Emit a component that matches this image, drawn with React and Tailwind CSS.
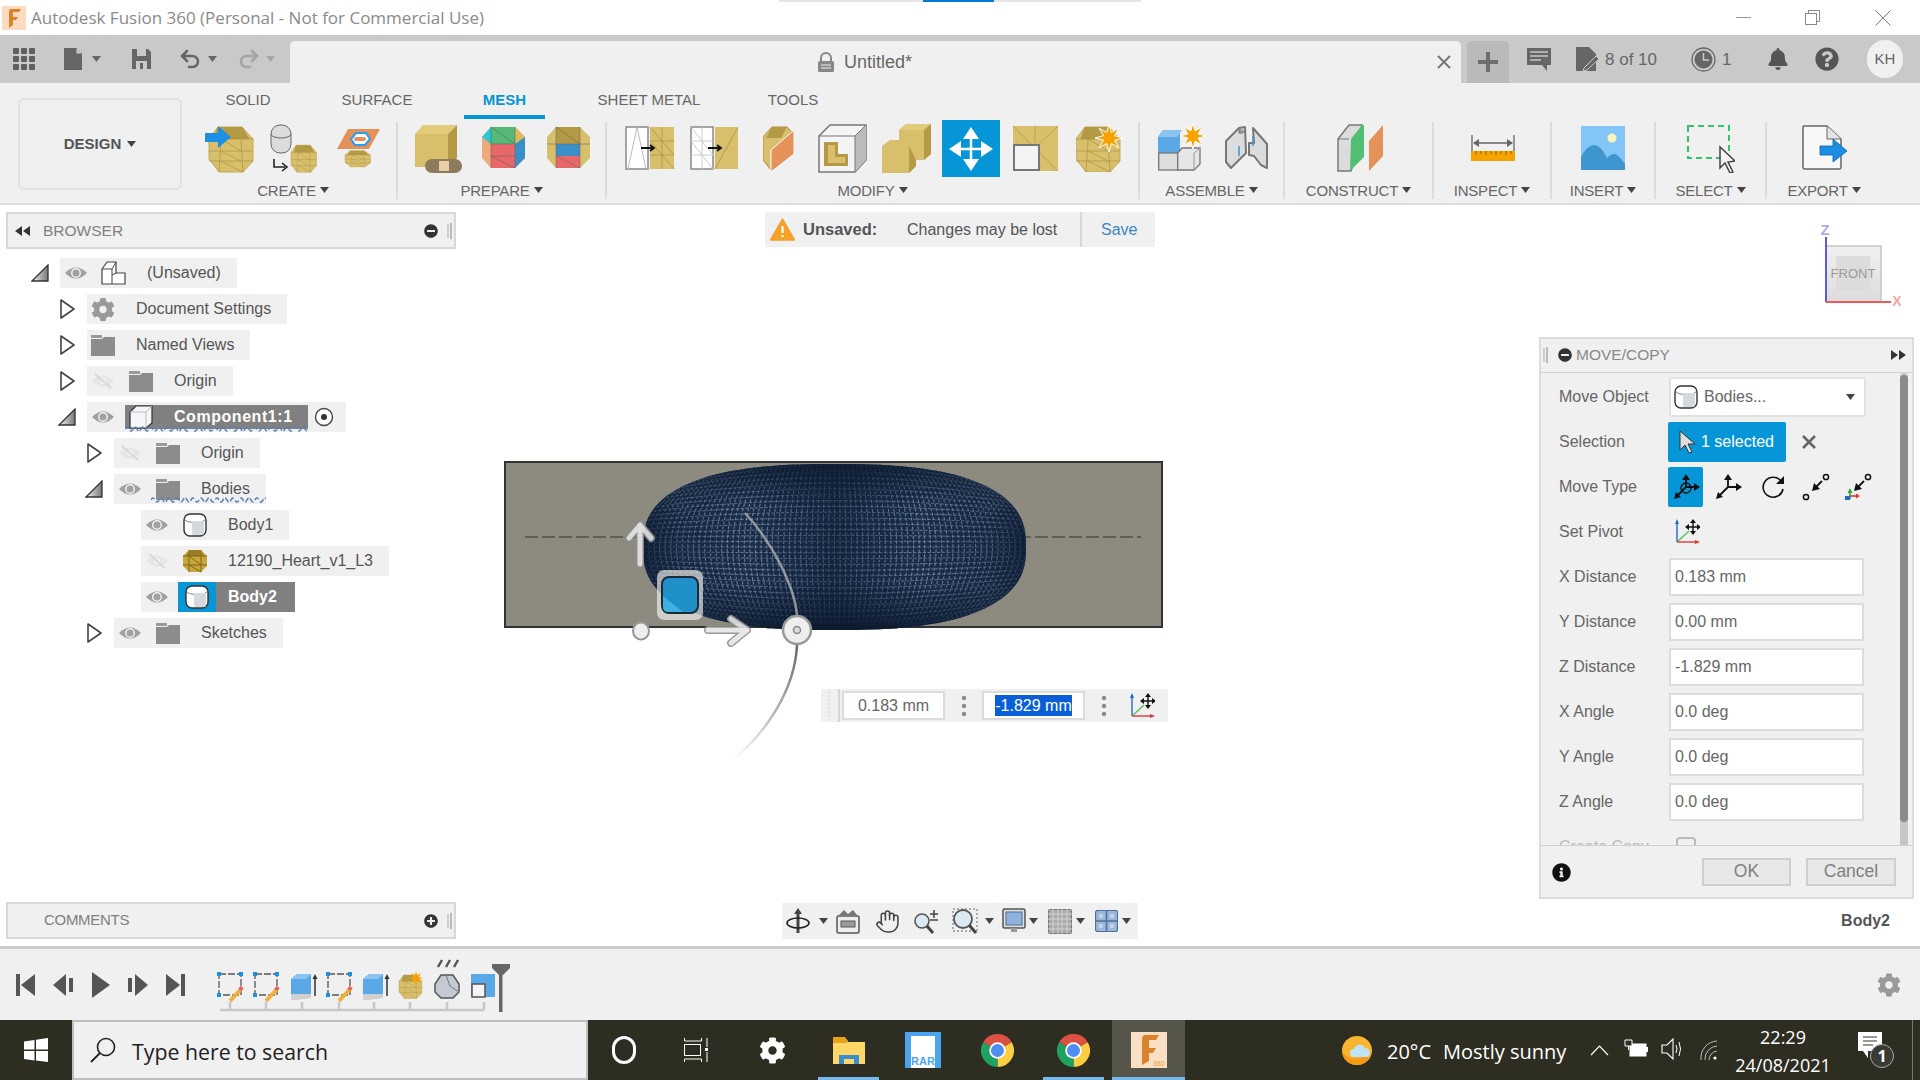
import React from 'react';
import { Hand, Undo2, Redo2 } from 'lucide-react';
import { FaBell, FaCog, FaInfoCircle, FaMinusCircle, FaPlusCircle, FaQuestionCircle } from 'react-icons/fa';

const GOLD = '#d8bf6c';
const GOLD_DARK = '#b59a45';
const GOLD_LINE = '#a88f3e';

const Svg = ({ w, h, className = '', children }) => (
  <svg width={w} height={h} viewBox={`0 0 ${w} ${h}`} className={`shrink-0 ${className}`}>
    {children}
  </svg>
);

const Caret = ({ className = '', color = '#444' }) => (
  <Svg w={9} h={6} className={className}>
    <polygon points="0,0 9,0 4.5,6" fill={color} />
  </Svg>
);

const starPoints = (cx, cy, r1, r2, n = 8) => {
  const pts = [];
  for (let i = 0; i < n * 2; i++) {
    const a = (Math.PI * i) / n;
    const r = i % 2 === 0 ? r1 : r2;
    pts.push(`${(cx + r * Math.sin(a)).toFixed(1)},${(cy - r * Math.cos(a)).toFixed(1)}`);
  }
  return pts.join(' ');
};

// faceted mesh blob used all over the ribbon
const Oct = ({ t = '' }) => (
  <g transform={t}>
    <polygon points="9,2 33,2 44,14 44,36 34,47 10,47 0,34 0,14" fill={GOLD} stroke="#c2a956" />
    <polygon points="9,2 33,2 40,14 5,14" fill={GOLD_DARK} />
    <path d="M0 14H44M0 26H44M0 36H44M12 14L10 47M32 14L34 47M12 14L32 26M12 26L32 36M12 36L34 47M5 14L9 2M40 14L33 2" stroke={GOLD_LINE} strokeOpacity="0.65" fill="none" />
  </g>
);

const TabBar = () => (
  <div className="h-[48px] bg-[#c9c9c9] flex items-end">
    <div className="w-[290px] h-full flex items-center text-[#666]">
      <Svg w={22} h={22} className="ml-[13px]">
        {[0, 8, 16].map((y) => [0, 8, 16].map((x) => <rect key={`${x}-${y}`} x={x} y={y} width="6" height="6" rx="1" fill="#5f5f5f" />))}
      </Svg>
      <Svg w={20} h={24} className="ml-[28px]">
        <path d="M1 1H13L19 7V23H1Z" fill="#666" />
        <path d="M13 1V7H19" fill="#c9c9c9" stroke="#666" />
      </Svg>
      <Caret className="ml-[9px]" color="#666" />
      <Svg w={21} h={22} className="ml-[30px]">
        <path d="M1 1H17L20 4V21H1Z" fill="#666" />
        <rect x="6" y="1" width="9" height="7" fill="#c9c9c9" />
        <rect x="5" y="13" width="11" height="8" fill="#c9c9c9" />
        <rect x="9" y="15" width="3" height="6" fill="#666" />
      </Svg>
      <Undo2 size={24} strokeWidth={2.6} color="#666" className="ml-[26px]" />
      <Caret className="ml-[6px]" color="#666" />
      <Redo2 size={24} strokeWidth={2.6} color="#a5a5a5" className="ml-[20px]" />
      <Caret className="ml-[5px]" color="#a5a5a5" />
    </div>
    <div className="w-[1171px] h-[42px] bg-[#f0f0f0] rounded-t-[5px] flex items-center pl-[527px]">
      <Svg w={18} h={20}>
        <path d="M4 9V6a5 5 0 0 1 10 0V9" fill="none" stroke="#888" strokeWidth="2" />
        <rect x="1" y="9" width="16" height="11" rx="1.5" fill="#888" />
        <path d="M4 13H14M4 16H14" stroke="#f0f0f0" />
      </Svg>
      <span className="ml-[9px] mt-[1px] text-[18px] text-[#666]">Untitled*</span>
      <Svg w={14} h={14} className="ml-auto mr-[10px]">
        <path d="M1 1L13 13M13 1L1 13" stroke="#777" strokeWidth="2" />
      </Svg>
    </div>
    <div className="w-[42px] h-[42px] ml-[6px] rounded-t-[5px] bg-[#bababa] flex items-center justify-center">
      <Svg w={20} h={20}>
        <path d="M10 0V20M0 10H20" stroke="#6e6e6e" strokeWidth="4" />
      </Svg>
    </div>
    <div className="flex-1 h-full flex items-center text-[#666] text-[17px]">
      <Svg w={24} h={23} className="ml-[18px]">
        <path d="M0 0H24V17H20V23L15 17H0Z" fill="#666" />
        <path d="M3 4H21M3 8H21M3 12H14" stroke="#c9c9c9" strokeWidth="1.5" />
      </Svg>
      <Svg w={24} h={24} className="ml-[25px]">
        <path d="M0 0H13L20 7V24H0Z" fill="#666" />
        <path d="M8 21L20 9L23 12L11 23L7 24Z" fill="#666" stroke="#c9c9c9" />
      </Svg>
      <span className="ml-[5px] mt-[1px] w-[86px]">8 of 10</span>
      <Svg w={25} h={25}>
        <circle cx="12.5" cy="12.5" r="11.5" fill="none" stroke="#666" strokeWidth="1.3" />
        <circle cx="12.5" cy="12.5" r="9" fill="#666" />
        <path d="M12.5 6V13H18" stroke="#c9c9c9" strokeWidth="1.5" fill="none" />
      </Svg>
      <span className="ml-[6px] mt-[1px] w-[45px]">1</span>
      <FaBell size={22} color="#555" />
      <FaQuestionCircle size={24} color="#555" className="ml-[26px]" />
      <div className="ml-[28px] w-[36px] h-[38px] rounded-full bg-[#f0f0f0] flex items-center justify-center text-[15px]">KH</div>
    </div>
  </div>
);

const Section = ({ className, pad, label, border = true, children }) => (
  <div className={`h-[77px] ${border ? 'border-r-2 border-[#dcdcdc]' : ''} ${className}`}>
    <div className={`h-[50px] mt-[1px] flex items-start ${pad}`}>{children}</div>
    <div className="mt-[8px] h-[18px] flex items-center justify-center text-[15px] tracking-[-0.2px] text-[#666] leading-none">
      <span>{label}</span>
      <Caret className="ml-[4px]" />
    </div>
  </div>
);

const Ribbon = () => (
  <div className="h-[122px] bg-[#f0f0f0] border-b-2 border-[#dedede] flex">
    <div className="ml-[18px] mt-[15px] w-[164px] h-[92px] mr-[8px] border-2 border-[#e1e1e1] rounded-[6px] flex items-center justify-center text-[15px] font-bold text-[#555]">
      DESIGN
      <Caret className="ml-[6px]" />
    </div>
    <div className="flex-1">
      <div className="h-[36px] flex text-[15px] text-[#666]">
        {[
          ['SOLID', 'ml-[18px] w-[80px]'],
          ['SURFACE', 'ml-[49px] w-[80px]'],
          ['MESH', 'ml-[47px] w-[81px] text-[#0696d7] font-bold border-b-4 border-[#0696d7]'],
          ['SHEET METAL', 'ml-[45px] w-[118px]'],
          ['TOOLS', 'ml-[45px] w-[80px]'],
        ].map(([name, cls]) => (
          <div key={name} className={`h-[36px] pt-[6px] text-center ${cls}`}>{name}</div>
        ))}
      </div>
      <div className="mt-[3px] flex">
        <Section className="w-[208px]" pad="pl-[15px]" label="CREATE">
          <Svg w={49} h={49} className="mt-[1px]">
            <Oct t="translate(4,1)" />
            <polygon points="0,9 13,9 13,2 26,13 13,24 13,18 0,18" fill="#1a8fe3" />
          </Svg>
          <Svg w={47} h={49} className="ml-[16px] mt-[1px]">
            <rect x="1" y="1" width="20" height="28" rx="9" fill="#dcdcdc" stroke="#666" />
            <path d="M1 10a10 4 0 0 0 20 0" fill="none" stroke="#666" />
            <path d="M4 35V43H15M12 39L17 43L12 47" fill="none" stroke="#222" strokeWidth="1.6" />
            <Oct t="translate(21,20) scale(0.58,0.6)" />
          </Svg>
          <Svg w={43} h={49} className="ml-[20px] mt-[1px]">
            <polygon points="11,5 43,5 32,25 0,25" fill="#e4915a" />
            <polygon points="14,15 19,9 29,9 33,15 28,21 18,21" fill="#fff" stroke="#2d9cf0" strokeWidth="2" />
            <rect x="17" y="13" width="12" height="4" rx="2" fill="#e4915a" />
            <Oct t="translate(8,26) scale(0.58,0.36)" />
          </Svg>
        </Section>
        <Section className="w-[209px]" pad="pl-[17px]" label="PREPARE">
          <Svg w={47} h={49} className="mt-[1px]">
            <polygon points="8,1 42,1 33,10 0,10" fill="#e2cb7b" />
            <polygon points="0,10 33,10 33,43 0,43" fill={GOLD} />
            <polygon points="33,10 42,1 42,34 33,43" fill={GOLD_DARK} />
            <rect x="10" y="35" width="37" height="14" rx="7" fill="#8e7a5c" />
            <rect x="24" y="37" width="10" height="10" fill="#e8cfa6" />
          </Svg>
          <Svg w={43} h={43} className="ml-[20px] mt-[3px]">
            <polygon points="9,1 33,1 43,11 43,32 33,42 9,42 0,32 0,11" fill="#eeaa78" />
            <polygon points="9,1 0,11 9,18" fill="#2cc6d4" />
            <polygon points="33,1 43,11 33,18" fill="#dfbb55" />
            <polygon points="33,18 43,11 43,32 33,42" fill="#3b8fc9" />
            <rect x="9" y="1" width="24" height="17" fill="#55b979" />
            <rect x="9" y="18" width="24" height="24" fill="#e8686a" />
            <path d="M9 1L33 18M9 30H33M9 30L33 42M9 1V42M33 1V42M9 18H33" stroke="#5b5b5b" strokeOpacity="0.5" fill="none" />
          </Svg>
          <Svg w={43} h={43} className="ml-[22px] mt-[3px]">
            <polygon points="9,1 33,1 43,11 43,32 33,42 9,42 0,32 0,11" fill={GOLD} />
            <rect x="9" y="1" width="24" height="17" fill={GOLD_DARK} />
            <rect x="9" y="18" width="24" height="12" fill="#3b8fc9" />
            <rect x="9" y="30" width="24" height="12" fill="#e8686a" />
            <path d="M9 1L33 18M9 30L33 42M9 1V42M33 1V42M9 18H33M0 18H9M33 18H43" stroke="#5b5b5b" strokeOpacity="0.5" fill="none" />
          </Svg>
        </Section>
        <Section className="w-[533px]" pad="pl-[18px]" label="MODIFY">
          <Svg w={49} h={44} className="mt-[3px]">
            <rect x="1" y="1" width="22" height="42" fill="#fff" stroke="#888" strokeWidth="1.5" />
            <path d="M12 1L3 43M12 1L21 43" stroke="#bbb" fill="none" />
            <rect x="25" y="1" width="24" height="42" fill={GOLD} />
            <path d="M25 15H49M25 29H49M37 1V43M25 1L49 29M25 15L49 43" stroke={GOLD_LINE} strokeOpacity="0.7" fill="none" />
            <path d="M16 22H28M25 19L29 22L25 25" stroke="#111" strokeWidth="1.8" fill="none" />
          </Svg>
          <Svg w={48} h={44} className="ml-[16px] mt-[3px]">
            <rect x="1" y="1" width="22" height="42" fill="#fff" stroke="#888" strokeWidth="1.5" />
            <path d="M1 15H23M1 29H23M12 1V43M1 1L23 29M1 15L23 43" stroke="#ccc" fill="none" />
            <rect x="25" y="1" width="23" height="42" fill={GOLD} />
            <path d="M48 1L25 43" stroke={GOLD_LINE} strokeOpacity="0.7" fill="none" />
            <path d="M18 22H30M27 19L31 22L27 25" stroke="#111" strokeWidth="1.8" fill="none" />
          </Svg>
          <Svg w={31} h={46} className="ml-[25px] mt-[3px]">
            <polygon points="9,1 24,1 31,8 8,44 0,34 0,11" fill={GOLD} stroke={GOLD_LINE} />
            <polygon points="9,1 24,1 18,12 3,12" fill={GOLD_DARK} />
            <polygon points="31,4 31,28 8,46 8,24" fill="#e4915a" stroke="#fff" />
          </Svg>
          <Svg w={49} h={49} className="ml-[24px] mt-[1px]">
            <polygon points="1,12 12,1 48,1 48,36 37,48 1,48" fill="#f4f4f4" stroke="#777" strokeWidth="1.5" />
            <polygon points="37,12 48,1 48,36 37,48" fill="#bcbcbc" />
            <path d="M1 12H37V48M37 12L48 1" stroke="#777" fill="none" />
            <polygon points="6,18 20,18 20,30 30,30 30,42 6,42" fill={GOLD_DARK} />
            <polygon points="10,21 17,21 17,33 27,33 27,39 10,39" fill={GOLD} />
          </Svg>
          <Svg w={49} h={49} className="ml-[15px] mt-[1px]">
            <polygon points="17,6 24,0 49,0 49,30 42,36 34,36 34,42 27,49 0,49 0,22 8,16 17,16" fill={GOLD} />
            <polygon points="17,6 24,0 49,0 42,6" fill="#e2cb7b" />
            <polygon points="42,6 49,0 49,30 42,36" fill={GOLD_DARK} />
            <polygon points="27,22 34,36 34,42 27,49" fill={GOLD_DARK} />
          </Svg>
          <div className="w-[58px] h-[57px] ml-[11px] -mt-[3px] bg-[#0696d7] flex items-center justify-center">
            <Svg w={46} h={46}>
              <path d="M23 4V42M4 23H42" stroke="#fff" strokeWidth="2.5" />
              <path d="M23 1L31 13H15ZM23 45L31 33H15ZM1 23L13 15V31ZM45 23L33 15V31Z" fill="#fff" />
            </Svg>
          </div>
          <Svg w={45} h={45} className="ml-[13px] mt-[3px]">
            <rect width="45" height="45" fill={GOLD} />
            <path d="M0 0L45 45M22 0V45M45 0L22 22" stroke={GOLD_LINE} strokeOpacity="0.6" fill="none" />
            <rect x="1" y="19" width="25" height="25" fill="#f4f4f4" stroke="#777" strokeWidth="2" />
          </Svg>
          <Svg w={47} h={48} className="ml-[18px] mt-[1px]">
            <Oct t="translate(0,1)" />
            <polygon points={starPoints(33, 14, 14, 6)} fill="#f5a300" stroke="#fff" strokeWidth="1" />
          </Svg>
        </Section>
        <Section className="w-[145px]" pad="pl-[18px]" label="ASSEMBLE">
          <Svg w={48} h={48}>
            <polygon points="0,14 5,7 22,7 22,30 0,30" fill="#5ba8e6" />
            <polygon points="0,14 5,7 24,7 19,14" fill="#8cc4f0" />
            <rect x="0.7" y="30" width="19" height="17" fill="#dedede" stroke="#777" strokeWidth="1.3" />
            <polygon points="19.7,30 24,25 42,25 42,41 36,47 19.7,47" fill="#e6e6e6" stroke="#777" strokeWidth="1.3" />
            <path d="M36 47V30M36 30L42 25" stroke="#999" fill="none" />
            <polygon points={starPoints(35, 13, 13, 5.5)} fill="#f5a300" stroke="#fff" strokeWidth="1" />
          </Svg>
          <Svg w={45} h={46} className="ml-[19px] mt-[2px]">
            <polygon points="1,16 14,3 20,2 21,28 6,43 1,37" fill="#dcdcdc" stroke="#777" strokeWidth="2" strokeLinejoin="round" />
            <path d="M14 3V8Q18 9 20 6" fill="#9a9a9a" stroke="#777" />
            <polygon points="28,3 42,19 42,43 36,40 29,31 24,30 24,18 29,18" fill="#dcdcdc" stroke="#777" strokeWidth="2" strokeLinejoin="round" />
            <path d="M14 21V31M28 11V21" stroke="#3b9be0" strokeWidth="1.6" />
          </Svg>
        </Section>
        <Section className="w-[149px]" pad="pl-[52px]" label="CONSTRUCT">
          <Svg w={46} h={48} className="mt-[1px]">
            <polygon points="1,15 12,1 25,1 25,15 14,47 1,47" fill="#dcdcdc" stroke="#777" strokeWidth="1.5" />
            <path d="M12 15H1" stroke="#777" />
            <polygon points="14,15 25,1 27,1 27,33 13,47" fill="#52be74" />
            <polygon points="32,17 46,1 46,32 32,47" fill="#e4915a" />
          </Svg>
        </Section>
        <Section className="w-[118px]" pad="pl-[37px]" label="INSPECT">
          <Svg w={44} h={26} className="mt-[12px]">
            <path d="M1 0V16M43 0V16M3 8H41" stroke="#666" strokeWidth="1.3" />
            <path d="M2 8L8 4V12ZM42 8L36 4V12Z" fill="#666" />
            <rect x="0" y="16" width="44" height="10" fill="#f5a300" />
            <path d="M5 16V20M10 16V19M15 16V20M20 16V19M25 16V20M30 16V19M35 16V20M40 16V19" stroke="#8a6100" />
          </Svg>
        </Section>
        <Section className="w-[104px]" pad="pl-[29px]" label="INSERT">
          <Svg w={44} h={44} className="mt-[3px]">
            <rect width="44" height="44" fill="#81c6f7" />
            <circle cx="31" cy="12" r="4.5" fill="#f6f4b8" />
            <path d="M0 31Q6 19 14 19Q20 20 26 32Q32 26 36 29Q40 32 44 38V44H0Z" fill="#3f96cf" />
          </Svg>
        </Section>
        <Section className="w-[111px]" pad="pl-[31px]" label="SELECT">
          <Svg w={48} h={48} className="mt-[2px]">
            <rect x="1" y="1" width="41" height="32" fill="none" stroke="#34c26a" strokeWidth="2" strokeDasharray="6 4" />
            <path d="M33 22L33 43L38 38L43 48L46 47L41 37L48 36Z" fill="#f4f4f4" stroke="#444" strokeWidth="1.5" />
          </Svg>
        </Section>
        <Section className="w-[114px]" pad="pl-[35px]" label="EXPORT" border={false}>
          <Svg w={46} h={46} className="mt-[2px]">
            <path d="M1 2Q1 1 2 1H25L39 14V42Q39 44 37 44H3Q1 44 1 42Z" fill="#f8f8f8" stroke="#666" strokeWidth="1.5" />
            <path d="M25 1V14H39" fill="#e5e5e5" stroke="#666" />
            <path d="M18 21H31V14L45 26L31 37V30H18Z" fill="#1a8fe3" stroke="#0d5fb0" strokeWidth="0.8" />
          </Svg>
        </Section>
      </div>
    </div>
  </div>
);

const Eye = ({ off }) =>
  off ? (
    <Svg w={24} h={16}>
      <path d="M1 8Q12 -3 23 8Q12 19 1 8Z" fill="#e6e6e6" />
      <circle cx="12" cy="8" r="3" fill="#f2f2f2" />
      <path d="M4 1L20 15" stroke="#d8d8d8" strokeWidth="2" />
    </Svg>
  ) : (
    <Svg w={24} h={16}>
      <path d="M1 8Q12 -3 23 8Q12 19 1 8Z" fill="#a0a0a0" />
      <circle cx="12" cy="8" r="5" fill="#f0f0f0" />
      <circle cx="12" cy="8" r="3.5" fill="#a0a0a0" />
    </Svg>
  );

const Folder = () => (
  <Svg w={24} h={22}>
    <path d="M0 1H11V4H0Z" fill="#9a9a9a" />
    <path d="M0 5H11L13 3H24V22H0Z" fill="#8c8c8c" />
  </Svg>
);

const BodyIcon = () => (
  <Svg w={24} h={24}>
    <rect x="1" y="1" width="22" height="22" rx="6" fill="#fff" stroke="#333" strokeWidth="1.4" />
    <path d="M1.5 6a10.5 3.5 0 0 0 21 0" fill="none" stroke="#666" strokeWidth="0.8" />
    <rect x="9" y="8" width="12" height="14" rx="2" fill="#d5d9de" />
  </Svg>
);

const CubeIcon = () => (
  <Svg w={24} h={24}>
    <polygon points="1,7 7,1 23,1 23,18 17,23 1,23" fill="#f4f6f9" stroke="#333" strokeWidth="1.2" />
    <path d="M1 7H17V23M17 7L23 1" stroke="#bbb" fill="none" />
  </Svg>
);

const PartsIcon = () => (
  <Svg w={26} h={25}>
    <path d="M1 8L6 1H15V12H24V23H1Z" fill="#fff" stroke="#444" strokeWidth="1.2" />
    <path d="M11 23V8M1 8H11L15 1M11 14L15 12" stroke="#444" fill="none" />
  </Svg>
);

const HeartIcon = () => (
  <Svg w={24} h={24}>
    <polygon points="6,1 18,1 24,7 24,17 18,23 6,23 0,17 0,7" fill="#c7a63a" />
    <polygon points="6,1 18,1 21,7 3,7" fill="#9a7d22" />
    <path d="M0 7H24M0 16H24M6 7L6 23M18 7L18 23M6 7L18 16M6 16L18 23" stroke="#7f6719" fill="none" />
  </Svg>
);

const TREE_ICONS = {
  gear: <FaCog size={25} color="#9a9a9a" />,
  folder: <Folder />,
  body: <BodyIcon />,
  cube: <CubeIcon />,
  parts: <PartsIcon />,
  heart: <HeartIcon />,
};

const squiggle = (w) => {
  let d = 'M0 3';
  for (let x = 0; x < w; x += 8) d += ' q2 -4 4 0 t4 0';
  return d;
};

const Squiggle = ({ w, className }) => (
  <svg width={w} height={6} className={`absolute ${className}`}>
    <path d={squiggle(w)} stroke="#5b7fb5" strokeWidth="1.6" strokeDasharray="5 2" fill="none" />
  </svg>
);

const TREE = [
  { depth: 0, open: true, eye: 'on', icon: 'parts', label: '(Unsaved)' },
  { depth: 1, open: false, icon: 'gear', label: 'Document Settings' },
  { depth: 1, open: false, icon: 'folder', label: 'Named Views' },
  { depth: 1, open: false, eye: 'off', icon: 'folder', label: 'Origin' },
  { depth: 1, open: true, eye: 'on', icon: 'cube', label: 'Component1:1', variant: 'active' },
  { depth: 2, open: false, eye: 'off', icon: 'folder', label: 'Origin' },
  { depth: 2, open: true, eye: 'on', icon: 'folder', label: 'Bodies', wavy: true },
  { depth: 3, eye: 'on', icon: 'body', label: 'Body1' },
  { depth: 3, eye: 'off', icon: 'heart', label: '12190_Heart_v1_L3' },
  { depth: 3, eye: 'on', icon: 'body', label: 'Body2', variant: 'selected' },
  { depth: 2, open: false, eye: 'on', icon: 'folder', label: 'Sketches' },
];

const INDENT = ['pl-[27px]', 'pl-[54px]', 'pl-[81px]', 'pl-[108px]'];

const Twisty = ({ open }) => {
  if (open === undefined) return null;
  return open ? (
    <Svg w={18} h={18} className="-ml-[2px]">
      <defs>
        <linearGradient id="twisty" x1="0" x2="1">
          <stop offset="0" stopColor="#f4f4f4" />
          <stop offset="1" stopColor="#777" />
        </linearGradient>
      </defs>
      <polygon points="1,17 17,1 17,17" fill="url(#twisty)" stroke="#333" strokeWidth="1.3" />
    </Svg>
  ) : (
    <Svg w={15} h={20}>
      <polygon points="1,1 14,10 1,19" fill="#fff" stroke="#444" strokeWidth="1.6" strokeLinejoin="round" />
    </Svg>
  );
};

const TreeRow = ({ row }) => {
  const { depth, open, eye, icon, label, variant, wavy } = row;
  let body;
  if (variant === 'active') {
    body = (
      <>
        <div className="w-[24px] mr-[10px]"><Eye /></div>
        <div className="relative w-[183px] h-[24px] bg-[#808080] flex items-center pl-[4px]">
          {TREE_ICONS[icon]}
          <span className="ml-[21px] font-bold text-white tracking-[0.55px]">{label}</span>
          <Squiggle w={183} className="left-0 -bottom-[3px]" />
        </div>
        <Svg w={20} h={20} className="ml-[6px]">
          <circle cx="10" cy="10" r="8.5" fill="#fff" stroke="#444" strokeWidth="1.4" />
          <circle cx="10" cy="10" r="3" fill="#333" />
        </Svg>
      </>
    );
  } else if (variant === 'selected') {
    body = (
      <>
        <div className="w-[24px] mr-[9px]"><Eye /></div>
        <div className="h-[30px] bg-[#808080] flex items-center pr-[18px]">
          <div className="w-[38px] h-[30px] bg-[#0696d7] flex items-center justify-center">{TREE_ICONS[icon]}</div>
          <span className="ml-[12px] font-bold text-white">{label}</span>
        </div>
      </>
    );
  } else {
    body = (
      <>
        {eye && <div className="w-[24px] mr-[14px]"><Eye off={eye === 'off'} /></div>}
        <div className="relative w-[24px] flex justify-center">{TREE_ICONS[icon]}</div>
        <span className="ml-[21px]">{label}</span>
        {wavy && <Squiggle w={115} className="left-[37px] bottom-[1px]" />}
      </>
    );
  }
  const pillPad = variant === 'selected' ? 'pr-0' : variant === 'active' ? 'pr-[12px]' : 'pr-[16px]';
  return (
    <div className={`flex items-center h-[36px] ${INDENT[depth]}`}>
      <div className="w-[27px] flex items-center">
        <Twisty open={open} />
      </div>
      <div className={`relative h-[30px] bg-[#f0f0f0] flex items-center pl-[4px] ${pillPad}`}>{body}</div>
    </div>
  );
};

const Grip = ({ className = '' }) => (
  <Svg w={5} h={16} className={className}>
    <path d="M1 1V15" stroke="#aaa" />
    <path d="M4 0V16" stroke="#888" />
  </Svg>
);

const BrowserColumn = () => (
  <div className="relative w-[456px] pl-[6px] py-[7px] flex flex-col text-[#555] text-[16px]">
    <div className="h-[37px] bg-[#f0f0f0] border-2 border-[#d8d8d8] flex items-center pl-[7px]">
      <Svg w={15} h={10}>
        <path d="M7 0V10L0 5ZM15 0V10L8 5Z" fill="#333" />
      </Svg>
      <span className="ml-[13px] text-[15.5px] text-[#808080]">BROWSER</span>
      <FaMinusCircle size={14} color="#333" className="ml-auto" />
      <Grip className="ml-[9px] mr-[2px]" />
    </div>
    <div className="mt-[6px]">
      {TREE.map((row, i) => <TreeRow key={i} row={row} />)}
    </div>
    <div className="mt-auto h-[37px] bg-[#f0f0f0] border-2 border-[#d8d8d8] flex items-center pl-[36px]">
      <span className="text-[15px] tracking-[-0.3px] text-[#808080]">COMMENTS</span>
      <FaPlusCircle size={14} color="#333" className="ml-auto" />
      <Grip className="ml-[9px] mr-[2px]" />
    </div>
  </div>
);

// the heart mesh, drawn in page coordinates; grid squeezed into the shape so it follows the rim
const MESH = (() => {
  const cx = 834.5, cy = 547, rx = 191.5, ry = 83;
  let outline = '';
  for (let i = 0; i <= 120; i++) {
    const a = (i / 120) * Math.PI * 2;
    const c = Math.cos(a), s = Math.sin(a);
    const x = cx + rx * Math.sign(c) * Math.pow(Math.abs(c), 0.78);
    const y = cy + ry * Math.sign(s) * Math.pow(Math.abs(s), 0.78);
    outline += `${i === 0 ? 'M' : 'L'}${x.toFixed(1)} ${y.toFixed(1)}`;
  }
  const map = (u, v) => {
    const x = cx + rx * 1.12 * u * Math.sqrt(1 - (v * v) / 2);
    const y = cy + ry * 1.12 * v * Math.sqrt(1 - (u * u) / 2);
    return `${x.toFixed(1)} ${y.toFixed(1)}`;
  };
  let v = '';
  let h = '';
  const nu = 76, nv = 32, steps = 36;
  for (let i = 0; i <= nu; i++) {
    const u = (i / nu) * 2 - 1;
    for (let k = 0; k <= steps; k++) v += `${k === 0 ? 'M' : 'L'}${map(u, (k / steps) * 2 - 1)}`;
  }
  for (let i = 0; i <= nv; i++) {
    const w = (i / nv) * 2 - 1;
    for (let k = 0; k <= steps; k++) h += `${k === 0 ? 'M' : 'L'}${map((k / steps) * 2 - 1, w)}`;
  }
  return { outline, v, h };
})();

const Arrow = ({ d }) => (
  <g opacity="0.9">
    <path d={d} stroke="#8f8f8f" strokeWidth="8" fill="none" strokeLinecap="round" strokeLinejoin="round" />
    <path d={d} stroke="#e6e6e6" strokeWidth="5" fill="none" strokeLinecap="round" strokeLinejoin="round" />
  </g>
);

const Scene = () => (
  <svg width="1920" height="741" className="absolute left-0 top-0">
    <defs>
      <clipPath id="meshClip"><path d={MESH.outline} /></clipPath>
      <linearGradient id="meshShade" x1="0" x2="1">
        <stop offset="0" stopColor="#0b1a30" stopOpacity="0.85" />
        <stop offset="0.1" stopColor="#0b1a30" stopOpacity="0.3" />
        <stop offset="0.28" stopColor="#0b1a30" stopOpacity="0" />
        <stop offset="0.5" stopColor="#0b1a30" stopOpacity="0.5" />
        <stop offset="0.72" stopColor="#0b1a30" stopOpacity="0" />
        <stop offset="0.9" stopColor="#0b1a30" stopOpacity="0.3" />
        <stop offset="1" stopColor="#0b1a30" stopOpacity="0.85" />
      </linearGradient>
      <linearGradient id="meshShadeV" x1="0" x2="0" y1="0" y2="1">
        <stop offset="0" stopColor="#0b1a30" stopOpacity="0.85" />
        <stop offset="0.25" stopColor="#0b1a30" stopOpacity="0" />
        <stop offset="0.7" stopColor="#0b1a30" stopOpacity="0" />
        <stop offset="1" stopColor="#0b1a30" stopOpacity="1" />
      </linearGradient>
      <linearGradient id="arcFade" gradientUnits="userSpaceOnUse" x1="797" y1="645" x2="735" y2="760">
        <stop offset="0" stopColor="#666" />
        <stop offset="1" stopColor="#fff" />
      </linearGradient>
      <linearGradient id="cubeFace" x1="0" x2="0" y1="0" y2="1">
        <stop offset="0" stopColor="#f0f0f0" />
        <stop offset="1" stopColor="#dcdcdc" />
      </linearGradient>
    </defs>
    <g transform="translate(0,-205)">
      <rect x="505" y="462" width="657" height="165" fill="#8d8a80" stroke="#333" strokeWidth="2" />
      <path d="M525 537H1141" stroke="#5f5e58" strokeWidth="2" strokeDasharray="13 4" />
      <g clipPath="url(#meshClip)">
        <rect x="630" y="460" width="410" height="180" fill="#1b2d4a" />
        <path d={MESH.v} stroke="#8aa0b8" strokeOpacity="0.75" strokeWidth="1.1" strokeDasharray="3 1.6" fill="none" />
        <path d={MESH.h} stroke="#8aa0b8" strokeOpacity="0.6" strokeWidth="1.1" strokeDasharray="3.4 1.4" fill="none" />
        <rect x="640" y="460" width="390" height="175" fill="url(#meshShade)" />
        <rect x="640" y="464" width="390" height="168" fill="url(#meshShadeV)" />
      </g>
      <path d="M767 627H898" stroke="#111a2a" strokeWidth="3" />

      <path d="M745 513C775 545 795 590 797 615" stroke="#b5b5b5" strokeOpacity="0.75" strokeWidth="2.5" fill="none" />
      <path d="M797 645C795 690 765 735 730 762" stroke="url(#arcFade)" strokeWidth="2.5" fill="none" />
      <Arrow d="M640 564V525M629 538L640 525L651 538" />
      <Arrow d="M708 630H746M731 619L747 630L731 643" />
      <ellipse cx="641" cy="631" rx="8" ry="8.5" fill="#eee" stroke="#999" strokeWidth="2" />
      <circle cx="797" cy="630" r="14" fill="#eee" stroke="#999" strokeWidth="2.5" />
      <circle cx="797" cy="630" r="3.5" fill="#ddd" stroke="#888" strokeWidth="1.5" />
      <rect x="657" y="570" width="46" height="50" rx="7" fill="#f4f4f0" fillOpacity="0.65" />
      <rect x="662" y="577" width="36" height="36" rx="7" fill="#1f90c8" stroke="#1b2a3a" strokeWidth="2" />
      <path d="M663 596L683 612H668Q663 612 663 606Z" fill="#3fb0e0" />

      {/* view cube */}
      <rect x="1826" y="246" width="55" height="56" fill="url(#cubeFace)" stroke="#c4c4c4" strokeWidth="1.5" />
      <rect x="1836" y="256" width="34" height="34" fill="#dcdcdc" />
      <text x="1853" y="278" textAnchor="middle" fontSize="13" fill="#9a9a9a" fontFamily="Liberation Sans">FRONT</text>
      <path d="M1826 237V302" stroke="#5a5ae6" strokeWidth="2" />
      <path d="M1826 302H1891" stroke="#ee5a5a" strokeWidth="2" />
      <text x="1825" y="235" textAnchor="middle" fontSize="15" fontWeight="bold" fill="#aaaaf0" fontFamily="Liberation Sans">Z</text>
      <text x="1897" y="306" textAnchor="middle" fontSize="14" fontWeight="bold" fill="#f4a5a5" fontFamily="Liberation Sans">X</text>
    </g>
  </svg>
);

const PivotIcon = ({ className = '' }) => (
  <Svg w={25} h={25} className={className}>
    <path d="M2 2V23" stroke="#2468c8" strokeWidth="1.4" />
    <path d="M2 0L0 5H4Z" fill="#2468c8" />
    <path d="M2 23L14 12" stroke="#52c25a" strokeWidth="1.4" />
    <path d="M2 23H23" stroke="#e03535" strokeWidth="1.4" />
    <path d="M25 23L20 21V25Z" fill="#e03535" />
    <path d="M18 1V15M11 8H25" stroke="#111" strokeWidth="1.4" />
    <path d="M18 0L15 4H21ZM18 16L15 12H21ZM10 8L14 5V11ZM26 8L22 5V11Z" fill="#111" />
  </Svg>
);

const Dots = ({ className = '' }) => (
  <Svg w={6} h={24} className={className}>
    <circle cx="3" cy="4" r="2.2" fill="#8a8a8a" />
    <circle cx="3" cy="12" r="2.2" fill="#8a8a8a" />
    <circle cx="3" cy="20" r="2.2" fill="#8a8a8a" />
  </Svg>
);

const ValueBar = () => (
  <div className="absolute left-[821px] top-[484px] h-[33px] w-[347px] bg-[#f0f0f0] flex items-center text-[16px] text-[#666]">
    <Svg w={16} h={33} className="ml-[4px]">
      <path d="M4 2V30" stroke="#ccc" strokeDasharray="2 2" />
      <path d="M14 0V33" stroke="#d5d5d5" strokeWidth="2" />
    </Svg>
    <div className="ml-[1px] w-[103px] h-[29px] bg-white border-2 border-[#dcdcdc] flex items-center justify-center">0.183 mm</div>
    <Dots className="ml-[16px]" />
    <div className="ml-[15px] w-[103px] h-[29px] bg-white border-2 border-[#dcdcdc] flex items-center justify-center">
      <span className="bg-[#0a5fd8] text-white h-[21px] w-[77px] leading-[21px] whitespace-nowrap text-center overflow-hidden">-1.829 mm</span>
    </div>
    <Dots className="ml-[16px]" />
    <PivotIcon className="ml-[23px]" />
  </div>
);

const Axes = ({ children }) => (
  <Svg w={28} h={28}>
    <path d="M14 14V4M14 14H26M14 14L4 24" stroke="#111" strokeWidth="1.8" />
    <path d="M14 1L10 7H18ZM28 14L22 10V18ZM2 26L4 19L9 24Z" fill="#111" />
    {children}
  </Svg>
);

const ScaleIcon = ({ colored }) => (
  <Svg w={28} h={28}>
    <circle cx="24" cy="4" r="2.6" fill="none" stroke="#111" strokeWidth="1.5" />
    <path d="M20 8L14 14" stroke="#111" strokeWidth="1.8" />
    <path d="M10 18L12 10L18 16Z" fill="#111" />
    {colored ? (
      <>
        <path d="M6 26V19" stroke="#2ea83e" strokeWidth="1.6" />
        <path d="M6 15L3.5 20H8.5Z" fill="#2ea83e" />
        <path d="M6 23H13" stroke="#e03535" strokeWidth="1.6" />
        <path d="M16 23L12 20.5V25.5Z" fill="#e03535" />
        <rect x="1" y="23" width="5" height="4" fill="#2468c8" />
      </>
    ) : (
      <circle cx="4" cy="24" r="2.6" fill="none" stroke="#111" strokeWidth="1.5" />
    )}
  </Svg>
);

const FIELDS = [
  ['X Distance', '0.183 mm'],
  ['Y Distance', '0.00 mm'],
  ['Z Distance', '-1.829 mm'],
  ['X Angle', '0.0 deg'],
  ['Y Angle', '0.0 deg'],
  ['Z Angle', '0.0 deg'],
];

const FormRow = ({ label, children, muted }) => (
  <div className="h-[45px] flex items-center">
    <div className={`w-[128px] pl-[18px] shrink-0 ${muted ? 'text-[#bbb]' : ''}`}>{label}</div>
    {children}
  </div>
);

const MoveCopyDialog = () => (
  <div className="h-[562px] bg-[#f0f0f0] border-2 border-[#dcdcdc] flex flex-col text-[16px] text-[#666]">
    <div className="h-[34px] shrink-0 pb-[2px] border-b border-[#d5d5d5] flex items-center text-[15.5px] text-[#888]">
      <Grip className="ml-[2px]" />
      <FaMinusCircle size={14} color="#333" className="ml-[10px]" />
      <span className="ml-[4px]">MOVE/COPY</span>
      <Svg w={15} h={10} className="ml-auto mr-[6px]">
        <path d="M0 0V10L7 5ZM8 0V10L15 5Z" fill="#333" />
      </Svg>
    </div>
    <div className="relative flex-1 overflow-hidden pt-[1px]">
      <FormRow label="Move Object">
        <div className="w-[197px] h-[40px] bg-white border-2 border-[#e2e2e2] rounded-[2px] flex items-center pl-[3px]">
          <BodyIcon />
          <span className="ml-[6px]">Bodies...</span>
          <Caret className="ml-auto mr-[9px]" />
        </div>
      </FormRow>
      <FormRow label="Selection">
        <div className="w-[118px] h-[40px] -ml-[1px] bg-[#0696d7] rounded-[2px] flex items-center pl-[11px] text-white">
          <Svg w={17} h={24}>
            <path d="M1 1V20L6 15L10 23L13 22L9 14L16 14Z" fill="#ddd" stroke="#333" strokeWidth="1" />
          </Svg>
          <span className="ml-[5px]">1 selected</span>
        </div>
        <Svg w={14} h={14} className="ml-[16px]">
          <path d="M1 1L13 13M13 1L1 13" stroke="#666" strokeWidth="2.6" />
        </Svg>
      </FormRow>
      <FormRow label="Move Type">
        <div className="-ml-[1px] w-[35px] h-[40px] bg-[#0696d7] rounded-[2px] flex items-center justify-center">
          <Axes><circle cx="14" cy="15" r="5" fill="none" stroke="#111" strokeWidth="1.4" /></Axes>
        </div>
        <div className="ml-[11px]"><Axes /></div>
        <Svg w={26} h={26} className="ml-[17px]">
          <path d="M22 7A10 10 0 1 0 24 15" fill="none" stroke="#111" strokeWidth="1.6" />
          <path d="M25 2V10H17Z" fill="#111" />
        </Svg>
        <div className="ml-[17px]"><ScaleIcon /></div>
        <div className="ml-[14px]"><ScaleIcon colored /></div>
      </FormRow>
      <FormRow label="Set Pivot">
        <PivotIcon className="ml-[6px]" />
      </FormRow>
      {FIELDS.map(([label, value]) => (
        <FormRow key={label} label={label}>
          <div className="w-[195px] h-[38px] bg-white border-2 border-[#dcdcdc] flex items-center pl-[4px]">{value}</div>
        </FormRow>
      ))}
      <FormRow label="Create Copy" muted>
        <div className="ml-[7px] w-[20px] h-[20px] border-2 border-[#bbb] rounded-[4px]" />
      </FormRow>
      <div className="absolute right-[4px] top-0 bottom-0 w-[8px] bg-[#c6c6c6] rounded-t-[4px]">
        <div className="h-[447px] mt-[2px] w-[8px] bg-[#8a8a8a] rounded-[4px]" />
      </div>
    </div>
    <div className="h-[52px] shrink-0 border-t border-[#d0d0d0] flex items-center">
      <FaInfoCircle size={19} color="#111" className="ml-[11px] mt-[2px]" />
      <div className="ml-auto w-[89px] h-[28px] bg-[#e8e8e8] border-2 border-[#cfcfcf] flex items-center justify-center text-[17.5px] text-[#808080]">OK</div>
      <div className="ml-[15px] mr-[16px] w-[90px] h-[28px] bg-[#e8e8e8] border-2 border-[#cfcfcf] flex items-center justify-center text-[17.5px] text-[#808080]">Cancel</div>
    </div>
  </div>
);

const NavBar = () => (
  <div className="h-[36px] w-[356px] bg-[#f0f0f0] flex items-center pl-[4px]">
    <Svg w={25} h={26}>
      <path d="M12 3V25" stroke="#444" strokeWidth="3" />
      <path d="M12 0L8 6H16Z" fill="#444" />
      <ellipse cx="12" cy="15" rx="11" ry="5" fill="none" stroke="#222" strokeWidth="1.6" />
    </Svg>
    <Caret className="ml-[8px]" />
    <Svg w={24} h={26} className="ml-[8px]">
      <path d="M3 7L8 2L12 6L17 2L21 7" fill="#777" />
      <rect x="1" y="8" width="22" height="17" rx="1.5" fill="#eee" stroke="#555" strokeWidth="1.5" />
      <rect x="5" y="13" width="14" height="6" fill="#9a9a9a" stroke="#555" />
    </Svg>
    <Hand size={25} strokeWidth={1.5} color="#444" className="ml-[15px]" />
    <Svg w={25} h={26} className="ml-[14px]">
      <circle cx="8" cy="13" r="7" fill="#dbe9f3" stroke="#555" strokeWidth="1.6" />
      <path d="M13 18L19 25" stroke="#444" strokeWidth="3" />
      <path d="M16 6H24M20 2V10M16 12H24" stroke="#444" strokeWidth="1.5" />
    </Svg>
    <Svg w={26} h={26} className="ml-[13px]">
      <rect x="1" y="1" width="24" height="22" fill="none" stroke="#666" strokeDasharray="2 2" />
      <circle cx="11" cy="11" r="9" fill="#dbe9f3" stroke="#555" strokeWidth="1.8" />
      <path d="M17 17L24 25" stroke="#444" strokeWidth="3" />
    </Svg>
    <Caret className="ml-[7px]" />
    <Svg w={24} h={26} className="ml-[8px]">
      <rect x="1" y="1" width="22" height="19" rx="1.5" fill="#ddd" stroke="#555" strokeWidth="1.5" />
      <rect x="4" y="4" width="16" height="13" fill="#8fb2dc" stroke="#4d6f9b" />
      <path d="M9 20V24H15V20" fill="#999" />
    </Svg>
    <Caret className="ml-[3px]" />
    <Svg w={24} h={25} className="ml-[10px]">
      <rect x="0.5" y="0.5" width="23" height="24" rx="1" fill="#aaa" stroke="#777" />
      <path d="M5 0V25M10 0V25M14 0V25M19 0V25M0 5H24M0 10H24M0 15H24M0 20H24" stroke="#ddd" strokeWidth="0.8" />
    </Svg>
    <Caret className="ml-[4px]" />
    <Svg w={23} h={22} className="ml-[10px]">
      <rect x="0.5" y="0.5" width="22" height="21" rx="2" fill="#9db6d8" stroke="#4d6f9b" strokeWidth="1.2" />
      <path d="M11.5 0V22M0 11H23" stroke="#4d6f9b" strokeWidth="1.5" />
      <rect x="4" y="4" width="4" height="4" fill="#c1d3ea" />
      <rect x="15" y="4" width="4" height="4" fill="#c1d3ea" />
      <rect x="4" y="14" width="4" height="4" fill="#c1d3ea" />
      <rect x="15" y="14" width="4" height="4" fill="#c1d3ea" />
    </Svg>
    <Caret className="ml-[4px]" />
  </div>
);

const Canvas = () => (
  <div className="relative flex-1 flex justify-between bg-white">
    <Scene />
    <BrowserColumn />
    <div className="absolute inset-x-0 inset-y-0 flex flex-col items-center justify-between py-[7px] pointer-events-none">
      <div className="w-[390px] h-[35px] bg-[#f0f0f0] flex items-center pl-[5px] text-[16px] text-[#555]">
        <Svg w={25} h={23}>
          <path d="M12.5 1L24.5 22H0.5Z" fill="#f5a02a" stroke="#f5a02a" strokeWidth="1.5" strokeLinejoin="round" />
          <path d="M12.5 8V15M12.5 17V19" stroke="#fff" strokeWidth="2.2" />
        </Svg>
        <span className="ml-[8px] font-bold w-[104px] text-[16.5px]">Unsaved:</span>
        <span className="w-[173px] whitespace-nowrap">Changes may be lost</span>
        <div className="w-[2px] h-[35px] bg-[#d8d8d8]" />
        <span className="ml-[19px] text-[#3a86c8]">Save</span>
      </div>
      <NavBar />
    </div>
    <ValueBar />
    <div className="relative w-[375px] mr-[6px] pt-[132px]">
      <MoveCopyDialog />
      <div className="mt-[10px] pr-[24px] text-right text-[16px] font-bold text-[#555]">Body2</div>
    </div>
  </div>
);

const SketchStep = ({ x }) => (
  <g transform={`translate(${x},0)`}>
    <rect x="-11" y="972" width="22" height="21" fill="none" stroke="#555" strokeWidth="1.3" strokeDasharray="7 2" />
    <path d="M-11 972h0M11 972h0M-11 993h0" stroke="#1c8fe6" strokeWidth="4" strokeLinecap="square" />
    <path d="M0 999L11 987" stroke="#eeb23a" strokeWidth="4" />
    <path d="M10 988L12 985" stroke="#e85c5c" strokeWidth="4" />
  </g>
);

const ExtrudeStep = ({ x }) => (
  <g transform={`translate(${x},0)`}>
    <polygon points="-11,977 -5,972 9,972 9,992 -11,992" fill="#5ba8e6" />
    <polygon points="-11,977 -5,972 9,972 4,977" fill="#8cc4f0" />
    <polygon points="-11,992 9,992 9,996 -5,998 -11,998" fill="#d0d0d0" />
    <path d="M13 994V974" stroke="#333" strokeWidth="1.5" />
    <path d="M13 972L10.5 977H15.5Z" fill="#333" />
  </g>
);

const Timeline = () => (
  <div className="h-[74px] shrink-0 bg-[#f0f0f0] border-t-[3px] border-[#cccccc] flex items-center">
    <div className="flex items-center ml-[16px]">
      <Svg w={19} h={22}>
        <rect width="4" height="22" fill="#555" />
        <path d="M19 0V22L5 11Z" fill="#555" />
      </Svg>
      <Svg w={20} h={22} className="ml-[18px]">
        <path d="M13 0V22L0 11Z" fill="#555" />
        <rect x="16" y="4" width="4" height="14" fill="#555" />
      </Svg>
      <Svg w={18} h={26} className="ml-[19px]">
        <path d="M0 0V26L18 13Z" fill="#555" />
      </Svg>
      <Svg w={20} h={22} className="ml-[18px]">
        <path d="M7 0V22L20 11Z" fill="#555" />
        <rect y="4" width="4" height="14" fill="#555" />
      </Svg>
      <Svg w={19} h={22} className="ml-[18px]">
        <rect x="15" width="4" height="22" fill="#555" />
        <path d="M0 0V22L14 11Z" fill="#555" />
      </Svg>
    </div>
    <svg width="300" height="66" viewBox="0 0 300 66" className="ml-[30px] shrink-0">
      <g transform="translate(-215,-950)">
        <path d="M220 1008H484M230 1000V1008M266 1000V1008M302 1000V1008M339 1000V1008M374 1000V1008M410 1000V1008M447 1000V1008M484 1000V1008" stroke="#c8c8c8" strokeWidth="2.5" fill="none" />
        <SketchStep x={230} />
        <SketchStep x={266} />
        <ExtrudeStep x={302} />
        <SketchStep x={339} />
        <ExtrudeStep x={374} />
        <Oct t="translate(399,972) scale(0.52,0.52)" />
        <polygon points={starPoints(416, 976, 7, 3)} fill="#f5a300" />
        <polygon points="441,973 453,973 459,982 459,990 453,996 441,996 435,990 435,982" fill="#c5cad2" stroke="#555" strokeWidth="1.5" />
        <path d="M446 973L450 984L459 990" stroke="#777" fill="none" />
        <path d="M438 965L442 958M446 965L450 958M454 965L458 958" stroke="#555" strokeWidth="2.5" />
        <rect x="471" y="972" width="24" height="23" fill="#5ba8e6" />
        <rect x="472" y="982" width="13" height="13" fill="#f4f4f4" stroke="#555" strokeWidth="1.5" />
        <polygon points="492,962 510,962 510,966 503,973 499,973 492,966" fill="#666" />
        <rect x="499" y="972" width="3.5" height="38" fill="#666" />
      </g>
    </svg>
    <FaCog size={24} color="#9a9a9a" className="ml-auto mr-[19px]" />
  </div>
);

const Chrome = () => (
  <Svg w={33} h={33}>
    <g transform="scale(1.03)">
      <path d="M16 16L2.14 8A16 16 0 0 1 29.86 8Z" fill="#dd5144" />
      <path d="M16 16L29.86 8A16 16 0 0 1 16 32Z" fill="#fdcd42" />
      <path d="M16 16L16 32A16 16 0 0 1 2.14 8Z" fill="#1da261" />
      <circle cx="16" cy="16" r="8" fill="#fff" />
      <circle cx="16" cy="16" r="6.3" fill="#4f8ef1" />
    </g>
  </Svg>
);

const AppCell = ({ className = '', underline, children }) => (
  <div className={`relative h-[60px] flex items-center justify-center shrink-0 ${className}`}>
    {children}
    {underline && <div className="absolute left-0 right-0 bottom-0 h-[3px] bg-[#76b9ed]" />}
  </div>
);

const Taskbar = () => (
  <div className="relative h-[60px] shrink-0 bg-[#2e2d22] flex items-center text-white font-['Open_Sans',sans-serif]">
    <div className="w-[72px] flex justify-center">
      <Svg w={24} h={24}>
        <polygon points="0,3.5 10.5,2 10.5,11.5 0,11.5" fill="#fff" />
        <polygon points="12,1.8 24,0 24,11.5 12,11.5" fill="#fff" />
        <polygon points="0,13 10.5,13 10.5,22.5 0,21" fill="#fff" />
        <polygon points="12,13 24,13 24,24 12,22.5" fill="#fff" />
      </Svg>
    </div>
    <div className="w-[516px] h-[60px] bg-[#f0f0f0] border-2 border-[#bdbdbd] flex items-center pl-[16px] text-[#222]">
      <Svg w={26} h={26}>
        <circle cx="16" cy="10" r="8.5" fill="none" stroke="#222" strokeWidth="1.6" />
        <path d="M10 16L1 25" stroke="#222" strokeWidth="1.8" />
      </Svg>
      <span className="ml-[16px] mt-[3px] text-[21.3px]">Type here to search</span>
    </div>
    <AppCell className="w-[72px]">
      <div className="w-[24px] h-[28px] rounded-full border-[3.5px] border-white" />
    </AppCell>
    <AppCell className="w-[72px]">
      <Svg w={24} h={24}>
        <path d="M0 0V3H17V0M0 24V21H17V24" stroke="#fff" fill="none" transform="translate(0.5,0)" />
        <rect x="0.5" y="6.5" width="16" height="11" fill="none" stroke="#fff" />
        <path d="M23 0V9M23 14V24" stroke="#fff" />
        <rect x="21" y="10" width="3" height="3" fill="#fff" />
      </Svg>
    </AppCell>
    <AppCell className="w-[86px] pr-[6px]">
      <FaCog size={27} color="#fff" />
    </AppCell>
    <AppCell className="w-[61px]" underline>
      <Svg w={32} h={27}>
        <path d="M0 2H13L15 5H32V27H0Z" fill="#ffd766" />
        <path d="M0 0H12L15 4H0Z" fill="#e8a317" />
        <rect x="0" y="4" width="14" height="2" fill="#e8a317" />
        <path d="M6 27V18H26V27H21V22H11V27Z" fill="#3a8ed0" />
      </Svg>
    </AppCell>
    <AppCell className="w-[88px]">
      <div className="w-[36px] h-[36px] bg-[#4ca3f0] flex flex-col items-center justify-end">
        <div className="relative w-[24px] h-[32px] bg-white flex items-end justify-center text-[#4ca3f0] text-[11px] font-bold leading-[14px] font-['Liberation_Sans',sans-serif]">RAR</div>
      </div>
    </AppCell>
    <AppCell className="w-[61px]"><Chrome /></AppCell>
    <AppCell className="w-[61px] ml-[15px]" underline><Chrome /></AppCell>
    <AppCell className="w-[73px] ml-[8px] bg-[#55554a]" underline>
      <div className="relative w-[36px] h-[36px] bg-[#fbdfc4] flex items-center justify-center">
        <Svg w={22} h={32}>
          <path d="M4 31V5Q4 1 8 1H21L18 6H11V14H18L15 19H11V27Z" fill="#d9822b" />
        </Svg>
        <span className="absolute right-[2px] bottom-[1px] text-[7px] leading-none text-[#e8963c]">360</span>
      </div>
    </AppCell>
    <Svg w={30} h={29} className="ml-[157px]">
      <ellipse cx="15" cy="14.5" rx="15" ry="14.5" fill="#f8b52f" />
      <path d="M15 29C6 29 0 22 0 14.5C4 24 18 26 30 15C29 23 23 29 15 29Z" fill="#f59a14" />
      <path d="M12 21a4 4 0 0 1 0-8a6 6 0 0 1 11-1a5 5 0 0 1 3 9Z" fill="#bfe3f7" />
    </Svg>
    <span className="ml-[15px] mt-[3px] w-[56px] text-[20px]">20°C</span>
    <span className="w-[147px] mt-[3px] text-[20px]">Mostly sunny</span>
    <Svg w={19} h={11}>
      <path d="M1 10L9.5 1L18 10" stroke="#fff" strokeWidth="1.2" fill="none" />
    </Svg>
    <Svg w={24} h={18} className="ml-[15px] mb-[4px]">
      <rect x="6" y="5" width="16" height="12" fill="#fff" stroke="#fff" />
      <path d="M1 1H8V7H1ZM4.5 7V11M3 0V-1" stroke="#fff" fill="#2e2d22" />
      <rect x="22" y="8" width="2" height="5" fill="#fff" />
    </Svg>
    <Svg w={22} h={22} className="ml-[13px] mb-[2px]">
      <path d="M1 7H6L12 1V21L6 15H1Z" stroke="#fff" fill="none" strokeWidth="1.1" />
      <path d="M15 7Q17 11 15 15M18 4Q21 11 18 18" stroke="#fff" fill="none" />
    </Svg>
    <Svg w={18} h={20} className="ml-[17px]">
      <path d="M1 20A17 17 0 0 1 17 1M5 20A13 13 0 0 1 17 6M9 20A9 9 0 0 1 17 11" stroke="#bbb" fill="none" />
      <circle cx="15" cy="18" r="1.6" fill="#fff" />
    </Svg>
    <div className="ml-[12px] w-[106px] text-center text-[18px] leading-[28px] pt-[2px]">
      <div>22:29</div>
      <div>24/08/2021</div>
    </div>
    <div className="relative ml-[22px] w-[36px] h-[36px]">
      <Svg w={24} h={28} className="absolute left-0 top-0">
        <path d="M0 0H24V19H10L10 26L5 19H0Z" fill="#fff" />
        <path d="M5 5H19M5 9H19M5 13H15" stroke="#333" />
      </Svg>
      <div className="absolute right-0 bottom-0 w-[24px] h-[24px] rounded-full bg-[#3a3a32] border border-[#aaa] flex items-center justify-center text-[16px] font-bold">1</div>
    </div>
    <div className="absolute right-[7px] top-0 bottom-0 w-px bg-[#777]" />
  </div>
);

export default function App() {
  return (
    <div className="w-[1920px] h-[1080px] flex flex-col overflow-hidden bg-white font-['Liberation_Sans',sans-serif]">
      <div className="relative h-[35px] shrink-0 flex items-center font-['Open_Sans',sans-serif]">
        <div className="absolute left-[779px] top-0 w-[362px] h-[2px] bg-[#e5e5e5]">
          <div className="ml-[144px] w-[71px] h-[2px] bg-[#0078d4]" />
        </div>
        <div className="ml-[2px] w-[24px] h-[24px] bg-[#fbdcc0] flex items-center justify-center">
          <Svg w={14} h={20}>
            <path d="M2 20V3Q2 1 4 1H14L12 4H6V9H11L9 12H6V17Z" fill="#d9822b" />
          </Svg>
        </div>
        <span className="ml-[5px] text-[17px] text-[#8a8a8a]">Autodesk Fusion 360 (Personal - Not for Commercial Use)</span>
        <div className="ml-auto mr-[29px] flex items-center">
          <div className="w-[15px] h-px bg-[#999]" />
          <Svg w={15} h={15} className="ml-[54px]">
            <rect x="0.5" y="3.5" width="11" height="11" fill="none" stroke="#888" />
            <path d="M3.5 3V0.5H14.5V11.5H12" fill="none" stroke="#888" />
          </Svg>
          <Svg w={16} h={16} className="ml-[55px]">
            <path d="M0.5 0.5L15.5 15.5M15.5 0.5L0.5 15.5" stroke="#777" />
          </Svg>
        </div>
      </div>
      <TabBar />
      <Ribbon />
      <Canvas />
      <Timeline />
      <Taskbar />
    </div>
  );
}
